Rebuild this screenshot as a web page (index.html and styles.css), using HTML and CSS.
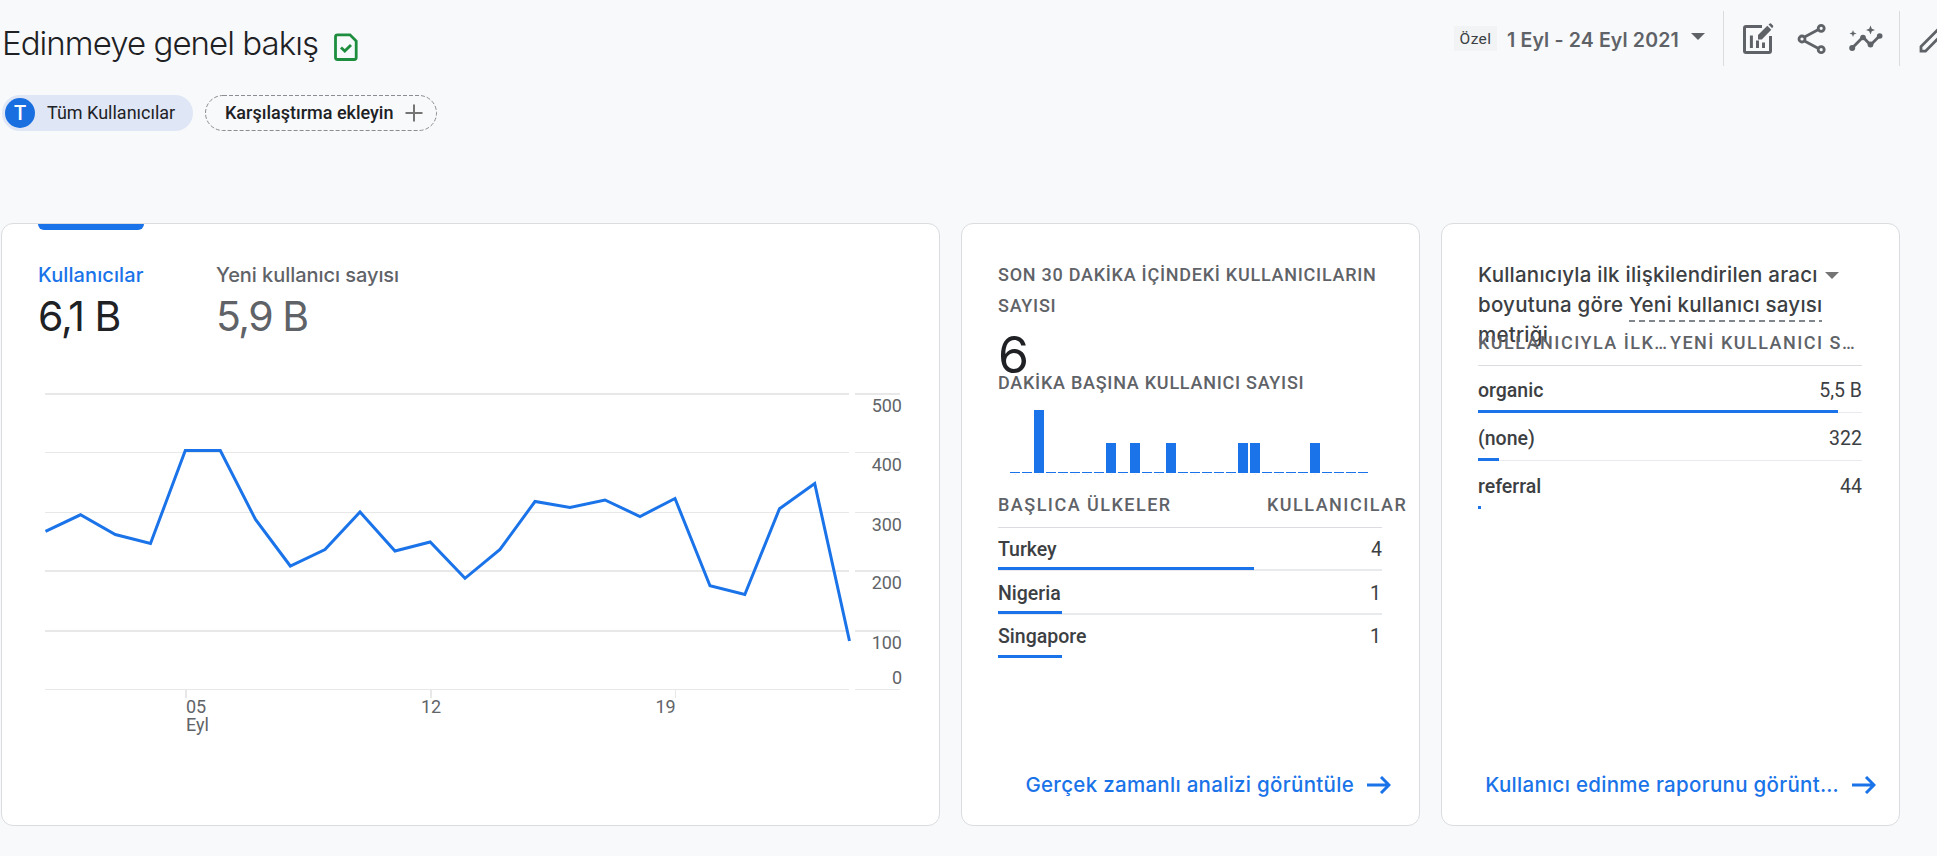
FILE: index.html
```html
<!DOCTYPE html>
<html lang="tr">
<head>
<meta charset="utf-8">
<title>Edinmeye genel bakış</title>
<link rel="stylesheet" href="styles.css">
</head>
<body>
<header class="header">
  <h1 class="title"><span class="title-text">Edinmeye genel bakış</span>
    <svg class="title-icon" width="26" height="30" viewBox="333 32 26 30"><path d="M337.5 34.8H350L356.2 41V57.5Q356.2 59.5 354.2 59.5H337.5Q335.5 59.5 335.5 57.5V36.8Q335.5 34.800 337.500 34.800Z" fill="none" stroke="#1e8e3e" stroke-width="2.800"/><path d="M341 47.500L344.800 51L351 45" fill="none" stroke="#1e8e3e" stroke-width="2.900"/></svg>
  </h1>
  <div class="toolbar">
    <span class="badge">Özel</span>
    <span class="date">1 Eyl - 24 Eyl 2021</span>
    <svg class="date-caret" width="14" height="7" viewBox="0 0 14 7"><path d="M0 0H14L7 7Z" fill="#5f6368"/></svg>
    <i class="divider"></i>
    <svg class="tool-chart" width="32" height="32" viewBox="1742 22 32 32"><g fill="none" stroke="#5f6368"><path d="M1762 25.500H1746Q1744.500 25.500 1744.500 27V50Q1744.500 51.500 1746 51.500H1769Q1770.500 51.500 1770.500 50V35" stroke-width="3"/><path d="M1751.400 34.500V47M1757.500 39.500V47M1763.500 41.500V47" stroke-width="3"/></g><path d="M1758 38.500V34L1767.300 24.700L1771.300 28.700L1761.800 38.500ZM1768.500 23.500L1769.800 22.400Q1770.400 22 1771 22.500L1773 24.600Q1773.700 25.300 1773 26L1772.100 27.200Z" fill="#5f6368"/></svg>
    <svg class="tool-share" width="30" height="32" viewBox="1797 22 30 32"><g fill="none" stroke="#5f6368" stroke-width="2.800"><path d="M1804.500 36L1818.500 28.500M1804.500 40L1818.500 47.500"/><circle cx="1802" cy="38" r="3"/><circle cx="1821.200" cy="27.300" r="3"/><circle cx="1821.200" cy="48.700" r="3"/></g></svg>
    <svg class="tool-insights" width="34" height="28" viewBox="1849 24 34 28"><g fill="#5f6368"><path d="M1852.200 47L1863 36L1870.500 44L1880 34.500" fill="none" stroke="#5f6368" stroke-width="2.800"/><circle cx="1852.200" cy="47" r="3"/><circle cx="1863" cy="36.500" r="2.800"/><circle cx="1870.500" cy="43.500" r="2.900"/><circle cx="1879.700" cy="35" r="2.800"/><path d="M1870.500 24.500L1871.800 27.700L1875 29L1871.800 30.300L1870.500 33.500L1869.200 30.300L1866 29L1869.200 27.700ZM1853 29L1853.900 31.600L1856.500 32.500L1853.900 33.400L1853 36L1852.100 33.400L1849.500 32.500L1852.100 31.600Z"/></g></svg>
    <i class="divider"></i>
    <svg class="tool-edit" width="18" height="32" viewBox="1919 22 18 32"><path d="M1921 50.200V45.500L1940 26.500L1944.500 31L1925.500 50.200Z" fill="none" stroke="#5f6368" stroke-width="2.800"/></svg>
  </div>
</header>
<div class="chips">
  <div class="chip"><span class="avatar">T</span><span class="chip-text">Tüm Kullanıcılar</span></div>
  <div class="chip chip-add">
    <svg class="chip-outline" width="232" height="36"><rect x=".5" y=".5" width="231" height="35" rx="17.500" fill="none" stroke="#8a8d91" stroke-dasharray="4 2"/></svg>
    <span class="chip-text">Karşılaştırma ekleyin</span>
    <svg width="18" height="18" viewBox="0 0 18 18"><path d="M.5 9H17.500M9 .5V17.500" stroke="#757575" stroke-width="2"/></svg>
  </div>
</div>
<main class="cards">
  <section class="card overview">
    <div class="metrics">
      <div class="metric active"><div class="metric-label">Kullanıcılar</div><div class="metric-value">6,1 B</div></div>
      <div class="metric second"><div class="metric-label">Yeni kullanıcı sayısı</div><div class="metric-value">5,9 B</div></div>
    </div>
    <svg class="line-chart" width="937" height="400" viewBox="2 340 937 400">
      <g fill="#e8e8e8">
        <path d="M45 393H849V395H45ZM45 452H849V453H45ZM45 512H849V513H45ZM45 570H849V572H45ZM45 630H849V632H45ZM45 689H849V690H45Z"/>
        <path d="M855 393H900V395H855ZM855 452H900V453H855ZM855 512H900V513H855ZM855 570H900V572H855ZM855 630H900V632H855ZM855 689H900V690H855Z"/>
        <path d="M185 689H187V698H185ZM430 689H432V698H430ZM675 689H676V698H675Z"/>
      </g>
      <polyline fill="none" stroke="#1a73e8" stroke-width="3" points="45.500,531.300 80.500,514.800 115.300,534.500 150.500,543.500 185.300,450.500 220.300,450.500 255.500,519.500 290.300,566 325,549.500 360,512 395,551 430.200,542 465,578.300 500,549.500 535,501.500 570,507.500 605,500 640,516.500 675,498.500 710,585.700 744.800,594.500 779.500,508.700 814.700,483.500 849.500,641"/>
      <g class="axis axis-y">
        <text x="902" y="412">500</text><text x="902" y="471">400</text><text x="902" y="531">300</text><text x="902" y="589">200</text><text x="902" y="649">100</text><text x="902" y="684">0</text>
      </g>
      <g class="axis"><text x="186" y="713">05</text><text x="186" y="731">Eyl</text><text x="421" y="713">12</text><text x="655.500" y="713">19</text></g>
    </svg>
  </section>

  <section class="card realtime">
    <h2 class="caps">SON 30 DAKİKA İÇİNDEKİ KULLANICILARIN SAYISI</h2>
    <div class="big">6</div>
    <h3 class="caps caps-sub">DAKİKA BAŞINA KULLANICI SAYISI</h3>
    <svg class="bars" width="384" height="66" viewBox="998 410 384 66">
      <path d="M1010 472.500H1368" stroke="#1a73e8" stroke-dasharray="10 2"/>
      <path d="M1014.500 474.500H1364" stroke="#dcdfe3" stroke-dasharray="1 11"/>
      <path fill="#1a73e8" d="M1034 410h10v63h-10zM1106 443h10v30h-10zM1130 443h10v30h-10zM1166 443h10v30h-10zM1238 443h10v30h-10zM1250 443h10v30h-10zM1310 443h10v30h-10z"/>
    </svg>
    <div class="thead"><span class="col-a">BAŞLICA ÜLKELER</span><span class="col-b">KULLANICILAR</span></div>
    <div class="row"><span class="name">Turkey</span><span>4</span><i class="fill" style="width:256px"></i></div>
    <div class="row"><span class="name">Nigeria</span><span class="one">1</span><i class="fill" style="width:64px"></i></div>
    <div class="row"><span class="name">Singapore</span><span class="one">1</span><i class="fill" style="width:64px"></i></div>
    <a class="more"><span>Gerçek zamanlı analizi görüntüle</span><svg width="24" height="18" viewBox="0 0 24 18"><path d="M0 9H21.500M14 1L22 9L14 17" fill="none" stroke="#1a73e8" stroke-width="3"/></svg></a>
  </section>

  <section class="card sources">
    <h2 class="dimension"><span class="l1">Kullanıcıyla ilk ilişkilendirilen aracı<svg class="caret" width="14" height="7" viewBox="0 0 14 7"><path d="M0 0H14L7 7Z" fill="#757575"/></svg></span><span class="l2">boyutuna göre <span class="under">Yeni kullanıcı sayısı</span></span><span class="l3">metriği</span></h2>
    <div class="thead"><span class="col-a">KULLANICIYLA İLK…</span><span class="col-b">YENİ KULLANICI S…</span></div>
    <div class="row"><span class="name">organic</span><span>5,5 B</span><i class="fill" style="width:360px"></i></div>
    <div class="row"><span class="name">(none)</span><span>322</span><i class="fill" style="width:21px"></i></div>
    <div class="row"><span class="name">referral</span><span>44</span><i class="fill" style="width:3px"></i></div>
    <a class="more"><span>Kullanıcı edinme raporunu görünt…</span><svg width="24" height="18" viewBox="0 0 24 18"><path d="M0 9H21.500M14 1L22 9L14 17" fill="none" stroke="#1a73e8" stroke-width="3"/></svg></a>
  </section>
</main>
</body>
</html>
```
FILE: styles.css
```css
* { box-sizing: border-box; }
body { margin: 0; width: 1937px; height: 856px; overflow: hidden; background: #f8f9fb; font-family: Roboto, "Liberation Sans", sans-serif; color: #202124; }
h1, h2, h3 { margin: 0; font-weight: 400; }
svg { display: block; flex: none; }
span { white-space: nowrap; }

.header { display: flex; justify-content: space-between; height: 95px; padding-top: 11px; }
.title { display: flex; align-items: flex-start; padding: 12px 0 0 2px; font: 350 33px/40px Inter, sans-serif; }
.title-text { width: 322px; letter-spacing: -0.95px; }
.title-icon { margin: 9px 0 0 9px; }
.toolbar { display: flex; align-items: center; height: 55px; color: #5f6368; }
.badge { width: 43px; height: 25px; background: #f1f3f4; color: #3c4043; font-size: 15.500px; line-height: 27px; text-align: center; letter-spacing: .4px; }
.date { width: 173px; margin: 2px 0 0 10px; font: 600 19.500px/30px Inter, sans-serif; letter-spacing: .15px; }
.date-caret { margin: -4px 0 0 11px; }
.divider { width: 1px; height: 55px; background: #dadce0; margin-left: 18px; }
.tool-chart { margin-left: 18px; }
.tool-share { margin-left: 23px; }
.tool-insights { margin-left: 22px; }
.tool-insights + .divider { margin-left: 16px; }
.tool-edit { margin-left: 19px; }

.chips { display: flex; gap: 12px; padding-left: 2px; height: 36px; }
.chip { display: flex; align-items: center; width: 191px; height: 36px; padding-left: 3px; border-radius: 18px; background: #dfe6f5; font-size: 18px; line-height: 36px; }
.avatar { width: 30px; height: 30px; margin-right: 12px; border-radius: 50%; background: #1a6fe0; color: #fff; font-weight: 500; font-size: 20px; line-height: 30px; text-align: center; }
.chip-add { position: relative; width: 232px; padding-left: 20px; background: none; font-weight: 500; }
.chip-add .chip-text { width: 180px; }
.chip-outline { position: absolute; left: 0; top: 0; }

.cards { display: flex; gap: 21px; margin-top: 92px; padding-left: 1px; }
.card { display: flex; flex-direction: column; width: 459px; height: 603px; padding: 35px 37px 25px 36px; border: 1px solid #dadce0; border-radius: 12px; background: #fff; }
.overview { width: 939px; padding: 0; }

.metrics { display: flex; padding-left: 36px; }
.metric { padding-top: 36px; width: 106px; height: 116px; color: #5f6368; font-family: Inter, sans-serif; }
.metric-label { font-size: 20px; line-height: 30px; font-weight: 500; white-space: nowrap; letter-spacing: -0.05px; }
.metric-value { margin-top: 2px; font-size: 41px; line-height: 48px; white-space: nowrap; letter-spacing: -1.500px; }
.active { color: #1a73e8; }
.active::before { content: ""; display: block; height: 6px; margin: -36px 0 30px; border-radius: 0 0 6px 6px; background: #1a73e8; }
.active .metric-label { letter-spacing: .1px; }
.active .metric-value { color: #202124; letter-spacing: -1px; }
.second { margin-left: 72px; }
.axis { font-size: 18px; fill: #616468; }
.axis-y { text-anchor: end; }

.caps { font-weight: 500; font-size: 18px; line-height: 31px; letter-spacing: .74px; color: #5f6368; }
.caps-sub { line-height: 22px; }
.realtime .caps { margin-right: -10px; }
.big { margin-top: 18px; font: 400 50px/33px Inter, sans-serif; letter-spacing: -1px; }
.bars { margin-top: 16px; }
.thead { display: flex; height: 35px; border-bottom: 1px solid #dadce0; font-weight: 500; font-size: 18px; line-height: 24px; letter-spacing: 1.48px; color: #5f6368; }
.realtime .thead { margin-top: 17px; }
.col-a { width: 269px; flex: none; }
.row { position: relative; display: flex; justify-content: space-between; height: 44px; padding-top: 11px; border-bottom: 2px solid #e8eaed; font-size: 19.500px; line-height: 24px; color: #3c4043; }
.row:nth-last-child(2) { padding-top: 10px; border-color: transparent; }
.thead + .row { height: 43px; padding-top: 10px; }
.name { font-weight: 500; }
.one { padding-right: 1px; }
.fill { position: absolute; left: 0; bottom: -1px; height: 3px; background: #1a73e8; }
.more { display: flex; align-items: center; justify-content: flex-end; gap: 13px; margin: auto -9px 0 -20px; color: #1a73e8; font: 450 20.500px/30px Inter, sans-serif; letter-spacing: .3px; }

.dimension { height: 90px; margin-top: 1px; color: #3c4043; font: 450 20.500px/30px Inter, sans-serif; letter-spacing: .23px; }
.dimension > span { display: flex; height: 30px; white-space: pre; }
.caret { margin: 12px 0 0 7px; }
.under { height: 32px; background: repeating-linear-gradient(90deg, #80868b 0 6px, transparent 6px 10px) 0 100% / 100% 2px no-repeat; }
.sources .thead { margin-top: -19px; }
.sources .col-a { width: 192px; }
.sources .row { height: 48px; padding-top: 14px; border-bottom-width: 1px; }
.sources .thead + .row { height: 47px; padding-top: 13px; }
.sources .more { margin-right: -14px; }
```
